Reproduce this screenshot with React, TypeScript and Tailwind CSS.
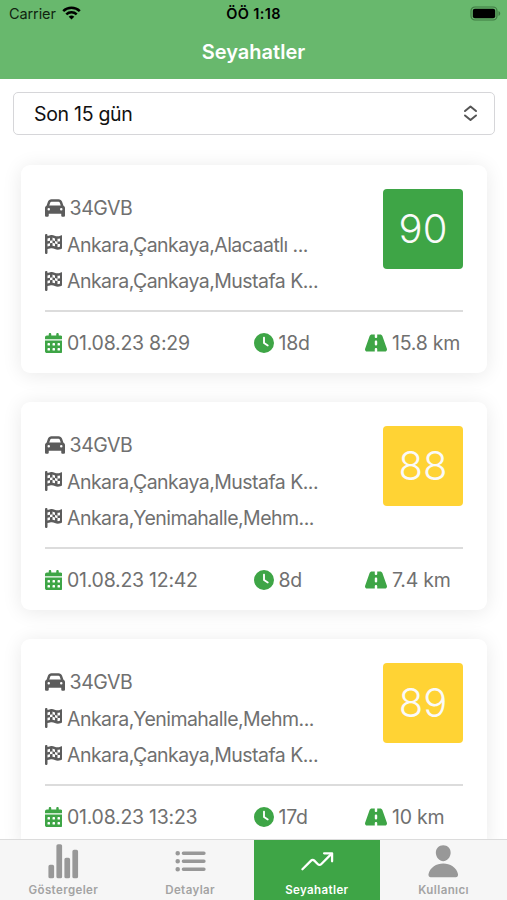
import { FaCalendarDays, FaCar, FaClock, FaFlagCheckered, FaRoad } from 'react-icons/fa6';
import { IoList, IoPerson, IoStatsChart, IoTrendingUp } from 'react-icons/io5';

const trips = [
  {
    plate: '34GVB',
    from: 'Ankara,Çankaya,Alacaatlı ...',
    to: 'Ankara,Çankaya,Mustafa K...',
    date: '01.08.23 8:29',
    duration: '18d',
    distance: '15.8 km',
    score: 90
  },
  {
    plate: '34GVB',
    from: 'Ankara,Çankaya,Mustafa K...',
    to: 'Ankara,Yenimahalle,Mehm...',
    date: '01.08.23 12:42',
    duration: '8d',
    distance: '7.4 km',
    score: 88
  },
  {
    plate: '34GVB',
    from: 'Ankara,Yenimahalle,Mehm...',
    to: 'Ankara,Çankaya,Mustafa K...',
    date: '01.08.23 13:23',
    duration: '17d',
    distance: '10 km',
    score: 89
  }
];

const tabs = [
  { label: 'Göstergeler', icon: IoStatsChart },
  { label: 'Detaylar', icon: IoList },
  { label: 'Seyahatler', icon: IoTrendingUp, active: true },
  { label: 'Kullanıcı', icon: IoPerson }
];

function StatusBar() {
  return (
    <div className="grid grid-cols-3 items-center h-[27px] pl-[9px] pr-[6px] text-[#10240f]">
      <div className="flex items-center gap-[6px]">
        <span className="text-[14.5px] tracking-[-0.1px]">Carrier</span>
        <svg className="w-[19px] h-[14px] -mt-[1px]" viewBox="0 0 19 14" fill="none" stroke="#000" strokeWidth="2.5">
          <path d="M1.2 5.2a11.8 11.8 0 0 1 16.6 0" />
          <path d="M4.3 8.4a7.4 7.4 0 0 1 10.4 0" />
          <path d="M9.5 13.6 6.7 10.8a4 4 0 0 1 5.6 0z" fill="#000" stroke="none" />
        </svg>
      </div>
      <span className="text-center text-[14.5px] font-semibold tracking-[0.35px] -ml-[3px] text-black">ÖÖ 1:18</span>
      <svg className="w-[31px] h-[15px] justify-self-end -mt-[1px]" viewBox="0 0 31 15">
        <rect x="1" y="1" width="26" height="13" rx="4" fill="none" stroke="#3f7a42" strokeWidth="1.2" />
        <rect x="2.8" y="2.8" width="22.4" height="9.4" rx="2" fill="#000" />
        <path d="M28.5 5v5c1-.4 1.7-1.4 1.7-2.5S29.5 5.4 28.5 5z" fill="#3f7a42" />
      </svg>
    </div>
  );
}

function TripCard({ trip }: { trip: (typeof trips)[number] }) {
  return (
    <div className="shrink-0 h-[208px] rounded-[9px] bg-white px-[24px] pt-[24px] shadow-[0_2px_20px_rgba(0,0,0,0.09)]">
      <div className="flex justify-between h-[123px] border-b-2 border-[#dcdcdc]">
        <div className="flex flex-col">
          <div className="flex items-center h-[37px] gap-[5px]">
            <FaCar className="w-[20px] h-[20px] text-[#5c5c5c]" />
            <span className="pt-[2px] tracking-[-0.4px]">{trip.plate}</span>
          </div>
          {[trip.from, trip.to].map((place, index) => (
            <div key={index} className="flex items-center h-[36.5px] gap-[5px]">
              <FaFlagCheckered className="w-[17.5px] h-[20px] text-[#5c5c5c]" />
              <span className="pt-[2px] tracking-[-0.53px] whitespace-nowrap">{place}</span>
            </div>
          ))}
        </div>
        <div
          className={`flex items-center justify-center w-[80px] h-[80px] rounded-[4px] text-[40px] font-light text-[#fafafa] ${
            trip.score >= 90 ? 'bg-[#3ea546]' : 'bg-[#ffd334]'
          }`}
        >
          {trip.score}
        </div>
      </div>

      {/* Date, duration and distance */}
      <div className="flex items-center h-[62px]">
        <div className="flex items-center gap-[5px] w-[209px]">
          <FaCalendarDays className="w-[17.5px] h-[20px] text-[#3ea546]" />
          <span className="pt-[2px] tracking-[-0.25px]">{trip.date}</span>
        </div>
        <div className="flex items-center gap-[5px] w-[111.5px]">
          <FaClock className="w-[20px] h-[20px] text-[#3ea546]" />
          <span className="pt-[2px] tracking-[-0.2px]">{trip.duration}</span>
        </div>
        <div className="flex items-center gap-[5px] whitespace-nowrap">
          <FaRoad className="w-[22px] h-[20px] text-[#3ea546]" />
          <span className="pt-[2px] tracking-[-0.25px]">{trip.distance}</span>
        </div>
      </div>
    </div>
  );
}

export default function App() {
  return (
    <div className="flex flex-col w-[507px] h-[900px] overflow-hidden bg-white font-['Inter',sans-serif]">
      <header className="shrink-0 h-[79px] bg-[#68b86d]">
        <StatusBar />
        <h1 className="text-center text-[20px] leading-[51px] font-semibold text-white">Seyahatler</h1>
      </header>

      <main className="flex-1 min-h-0 overflow-hidden pt-[12.5px]">
        <button className="flex items-center justify-between mx-[13px] w-[482px] h-[43.5px] pl-[20px] pr-[16px] rounded-[5px] border-[1.5px] border-[#d6d6d9] text-[19.5px] text-[#111]">
          <span className="pt-[2px] tracking-[-0.3px]">Son 15 gün</span>
          <svg
            className="w-[15px] h-[18px]"
            viewBox="0 0 15 18"
            fill="none"
            stroke="#555"
            strokeWidth="2"
            strokeLinecap="round"
            strokeLinejoin="round"
          >
            <path d="M2 7 7.5 2.5 13 7" />
            <path d="M2 11.5 7.5 16 13 11.5" />
          </svg>
        </button>

        <div className="flex flex-col gap-[29px] pl-[20.5px] pr-[20px] pt-[30px] text-[19.5px] text-[#707070]">
          {trips.map((trip, index) => (
            <TripCard key={index} trip={trip} />
          ))}
        </div>
      </main>

      <nav className="grid grid-cols-4 shrink-0 h-[61.5px] border-t border-[#dcdcdc] bg-[#f6f6f6]">
        {tabs.map(({ label, icon: Icon, active }) => (
          <div
            key={label}
            className={`flex flex-col items-center pt-[3px] ${active ? 'bg-[#3ea546] text-white' : 'text-[#989898]'}`}
          >
            <Icon className="w-[36.5px] h-[36.5px]" />
            <span
              className={`mt-[2.5px] text-[11.5px] leading-[16px] font-semibold tracking-[0.4px] ${
                active ? 'text-white' : 'text-[#a3a3a3]'
              }`}
            >
              {label}
            </span>
          </div>
        ))}
      </nav>
    </div>
  );
}
